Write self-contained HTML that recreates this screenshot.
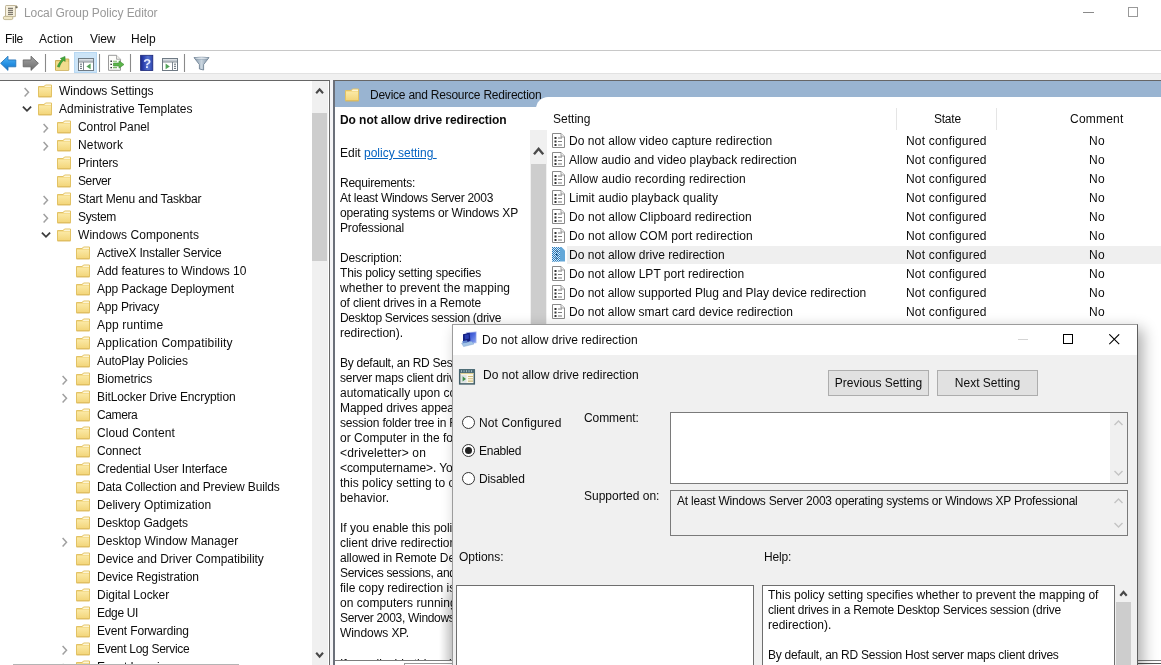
<!DOCTYPE html>
<html><head><meta charset="utf-8"><title>Local Group Policy Editor</title>
<style>
*{box-sizing:border-box}
html,body{margin:0;padding:0}
body{width:1161px;height:665px;overflow:hidden;background:#fff;position:relative;font-family:"Liberation Sans",sans-serif;font-size:12px;color:#0c0c0c;will-change:transform}
.abs,.fold{position:absolute}
.tx{position:absolute;white-space:nowrap;line-height:16px;height:16px;font-size:12px}
.b{font-weight:bold}
#tree{position:absolute;left:0;top:80px;width:330px;height:585px;border-top:1px solid #666;border-right:1px solid #6a6a6a;overflow:hidden}
#desc .tx{left:340px}
.btn{width:101px;height:26px;background:#e1e1e1;border:1px solid #adadad;text-align:center;line-height:24px;font-size:12px}
.rad{width:13px;height:13px;border:1px solid #333;border-radius:50%;background:#fff}
.rad i{position:absolute;left:2px;top:2px;width:7px;height:7px;border-radius:50%;background:#222}
</style></head><body>
<svg class="abs" width="0" height="0" style="left:0;top:0"><defs><linearGradient id="fg" x1="0" y1="0" x2="0" y2="1"><stop offset="0" stop-color="#fbe9a6"/><stop offset="1" stop-color="#f3d67b"/></linearGradient><pattern id="ck" width="2" height="2" patternUnits="userSpaceOnUse"><rect width="2" height="2" fill="#d4e9f7"/><rect width="1" height="1" fill="#2b7bbd"/><rect x="1" y="1" width="1" height="1" fill="#2b7bbd"/></pattern></defs></svg>
<!-- title bar -->
<svg class="abs" style="left:2px;top:4px" width="18" height="18" viewBox="2 4 18 18"><path d="M6.2 5.5 H15.6 C17 5.5 17.8 6.6 17.2 8 H15.4 V16.6 H5.5 V6.4 C5.5 5.8 5.8 5.5 6.2 5.5Z" fill="#f7f1de" stroke="#b9ae8e" stroke-width=".9"/><path d="M15.4 6 C16.6 5.8 17.6 6.6 17.3 7.9 H15.4Z" fill="#6d6a5c"/><path d="M8 8.3H13M8 10.3H13M8 12.3H13M8 14.3H13" stroke="#5f5c52" stroke-width="1"/><rect x="3.3" y="16.3" width="9.6" height="3.3" rx="1.6" fill="#f0e7c6" stroke="#b5a982" stroke-width=".8"/></svg>
<div class="tx" style="left:24px;top:5px;color:#999;letter-spacing:-0.075px">Local Group Policy Editor</div>
<svg class="abs" style="left:1083px;top:6px" width="12" height="12"><path d="M0 6.5H11" stroke="#8a8a8a" stroke-width="1"/></svg>
<svg class="abs" style="left:1128px;top:7px" width="12" height="12"><rect x=".5" y=".5" width="9" height="9" fill="none" stroke="#999"/></svg>
<!-- menu -->
<div class="tx" style="left:5px;top:31px;letter-spacing:-0.358px">File</div>
<div class="tx" style="left:39px;top:31px;letter-spacing:0.109px">Action</div>
<div class="tx" style="left:90px;top:31px;letter-spacing:-0.134px">View</div>
<div class="tx" style="left:131px;top:31px;letter-spacing:0.006px">Help</div>
<div class="abs" style="left:0;top:50px;width:1161px;height:1px;background:#c8c8c8"></div>
<!-- toolbar -->
<div id="toolbar">
<svg class="abs" style="left:0;top:50px" width="215" height="24" viewBox="0 50 215 24">
<defs>
<linearGradient id="gb" x1="0" y1="0" x2="0" y2="1"><stop offset="0" stop-color="#55b4f5"/><stop offset=".55" stop-color="#2590e2"/><stop offset="1" stop-color="#1b73c4"/></linearGradient>
<linearGradient id="gg" x1="0" y1="0" x2="0" y2="1"><stop offset="0" stop-color="#a2a2a2"/><stop offset=".55" stop-color="#858585"/><stop offset="1" stop-color="#6c6c6c"/></linearGradient>
<linearGradient id="gh" x1="0" y1="0" x2="1" y2="0"><stop offset="0" stop-color="#1c2a86"/><stop offset=".22" stop-color="#2a3fae"/><stop offset=".6" stop-color="#5673d0"/><stop offset="1" stop-color="#2c43ad"/></linearGradient>
<linearGradient id="gf" x1="0" y1="0" x2="1" y2="0"><stop offset="0" stop-color="#7f93a6"/><stop offset=".5" stop-color="#c9d5df"/><stop offset="1" stop-color="#7b8fa2"/></linearGradient>
</defs>
<path d="M8 56.2 L.6 63.3 L8 70.4 V66.8 H15.8 V59.9 H8 Z" fill="url(#gb)" stroke="#1f6fb4" stroke-width=".8"/>
<path d="M31 56.2 L38.4 63.3 L31 70.4 V66.8 H23.2 V59.9 H31 Z" fill="url(#gg)" stroke="#5f5f5f" stroke-width=".8"/>
<path d="M45.5 54V72M99.5 54V72M130.5 54V72M184.5 54V72" stroke="#8a8a8a" stroke-width="1.1"/>
<!-- folder up -->
<path d="M55.5 60.5 H61 L62.2 59 H68.8 V70.3 H55.5 Z" fill="#ecd27c" stroke="#c7a84c" stroke-width=".9"/>
<path d="M56 62 H68.3 V70 H56Z" fill="#f1dc8e"/>
<path d="M57.3 66.5 C58.6 63.3 60.3 61.2 62 59.6 L60.3 58.4 L65 56.4 L65.2 61.4 L63.6 60.4 C61.8 62 60.4 64 59.4 67.2 Z" fill="#43a83c" stroke="#2f8229" stroke-width=".5"/>
<!-- highlight -->
<rect x="74.5" y="52.5" width="22" height="20" fill="#cce4f7" stroke="#b7d8f3"/>
<!-- console 1 -->
<rect x="78.5" y="58.5" width="15" height="12" fill="#fff" stroke="#6f7a84"/>
<rect x="79" y="59.4" width="14" height="2.2" fill="#c3cad1"/>
<path d="M78.5 62H93.5M83.5 62V70.5" stroke="#6f7a84" stroke-width=".9"/>
<path d="M80 64.2h2M80 66.3h2M80 68.4h2" stroke="#5e6a75" stroke-width="1"/>
<path d="M90.6 63.5 V69.3 L86.4 66.4Z" fill="#54a35a"/>
<!-- export list -->
<path d="M108.5 55.3 H116.5 L120.5 59.3 V70.3 H108.5 Z" fill="#fdfdfb" stroke="#8f8f8f" stroke-width=".9"/>
<path d="M116.5 55.3 V59.3 H120.5" fill="#ecece8" stroke="#8f8f8f" stroke-width=".7"/>
<path d="M110.4 61.2h1.6M110.4 64.4h1.6M110.4 67.6h1.6" stroke="#3b3b3b" stroke-width="1.4"/>
<path d="M113 61.2h4M113 67.6h4" stroke="#7fb86a" stroke-width="1.1"/>
<path d="M113.5 63 H119 V60.8 L124 64.5 L119 68.2 V66 H113.5Z" fill="#5cb54b" stroke="#3c8c2f" stroke-width=".6"/>
<!-- help -->
<rect x="140.6" y="55.3" width="12.2" height="15.2" fill="url(#gh)" stroke="#1b2778" stroke-width=".8"/>
<text x="147.3" y="68" font-family="Liberation Sans" font-weight="bold" font-size="13" fill="#e6ecff" text-anchor="middle">?</text>
<!-- console 2 -->
<rect x="162.5" y="58.5" width="15" height="12" fill="#fff" stroke="#6f7a84"/>
<rect x="163" y="59.4" width="14" height="2.2" fill="#c3cad1"/>
<path d="M162.5 62H177.5M172.5 62V70.5" stroke="#6f7a84" stroke-width=".9"/>
<path d="M174 64.2h2M174 66.3h2M174 68.4h2" stroke="#5e6a75" stroke-width="1"/>
<path d="M165.6 63.5 V69.3 L169.8 66.4Z" fill="#54a35a"/>
<!-- filter -->
<path d="M194 57.6 H209 L203.6 64.6 V70 L199.4 69 V64.6 Z" fill="url(#gf)" stroke="#66798b" stroke-width=".8"/>
<ellipse cx="201.5" cy="58.2" rx="6.6" ry="1.1" fill="#e4ebf1" stroke="#7b8d9e" stroke-width=".5"/>
</svg>
</div>
<div class="abs" style="left:0;top:73px;width:1161px;height:7px;background:#f0f0f0;border-top:1px solid #e2e2e2"></div>
<!-- tree -->
<div id="tree"></div>
<svg class="abs" style="left:22px;top:85px" width="10" height="12" viewBox="0 0 10 12"><path d="M2.6 3 L6.5 7.2 L2.6 11.4" fill="none" stroke="#a0a0a0" stroke-width="1.5"/></svg>
<svg class="fold" style="left:37px;top:84px" width="16" height="14" viewBox="0 0 16 14"><path d="M1.5 2.5 L7 2.5 L8.5 1 L14.5 1 L14.5 12.7 L1.5 12.7 Z" fill="#f1d37a" stroke="#e2c264" stroke-width="1"/><path d="M8.8 1.6 L14 1.6 L14 3 L7.6 3 Z" fill="#fdf5d6"/><path d="M2 3.6 H14 V12.2 H2 Z" fill="url(#fg)"/><path d="M1.5 12.9 H14.5" stroke="#d9b552" stroke-width=".8"/></svg>
<div class="tx" style="left:59px;top:83px;letter-spacing:-0.056px">Windows Settings</div>
<svg class="abs" style="left:21px;top:104px" width="12" height="10" viewBox="0 0 12 10"><path d="M1.9 2.6 L6 6.8 L10.1 2.6" fill="none" stroke="#3c3c3c" stroke-width="1.8"/></svg>
<svg class="fold" style="left:37px;top:102px" width="16" height="14" viewBox="0 0 16 14"><path d="M1.5 2.5 L7 2.5 L8.5 1 L14.5 1 L14.5 12.7 L1.5 12.7 Z" fill="#f1d37a" stroke="#e2c264" stroke-width="1"/><path d="M8.8 1.6 L14 1.6 L14 3 L7.6 3 Z" fill="#fdf5d6"/><path d="M2 3.6 H14 V12.2 H2 Z" fill="url(#fg)"/><path d="M1.5 12.9 H14.5" stroke="#d9b552" stroke-width=".8"/></svg>
<div class="tx" style="left:59px;top:101px;letter-spacing:0.017px">Administrative Templates</div>
<svg class="abs" style="left:41px;top:121px" width="10" height="12" viewBox="0 0 10 12"><path d="M2.6 3 L6.5 7.2 L2.6 11.4" fill="none" stroke="#a0a0a0" stroke-width="1.5"/></svg>
<svg class="fold" style="left:56px;top:120px" width="16" height="14" viewBox="0 0 16 14"><path d="M1.5 2.5 L7 2.5 L8.5 1 L14.5 1 L14.5 12.7 L1.5 12.7 Z" fill="#f1d37a" stroke="#e2c264" stroke-width="1"/><path d="M8.8 1.6 L14 1.6 L14 3 L7.6 3 Z" fill="#fdf5d6"/><path d="M2 3.6 H14 V12.2 H2 Z" fill="url(#fg)"/><path d="M1.5 12.9 H14.5" stroke="#d9b552" stroke-width=".8"/></svg>
<div class="tx" style="left:78px;top:119px;letter-spacing:-0.102px">Control Panel</div>
<svg class="abs" style="left:41px;top:139px" width="10" height="12" viewBox="0 0 10 12"><path d="M2.6 3 L6.5 7.2 L2.6 11.4" fill="none" stroke="#a0a0a0" stroke-width="1.5"/></svg>
<svg class="fold" style="left:56px;top:138px" width="16" height="14" viewBox="0 0 16 14"><path d="M1.5 2.5 L7 2.5 L8.5 1 L14.5 1 L14.5 12.7 L1.5 12.7 Z" fill="#f1d37a" stroke="#e2c264" stroke-width="1"/><path d="M8.8 1.6 L14 1.6 L14 3 L7.6 3 Z" fill="#fdf5d6"/><path d="M2 3.6 H14 V12.2 H2 Z" fill="url(#fg)"/><path d="M1.5 12.9 H14.5" stroke="#d9b552" stroke-width=".8"/></svg>
<div class="tx" style="left:78px;top:137px;letter-spacing:0.151px">Network</div>

<svg class="fold" style="left:56px;top:156px" width="16" height="14" viewBox="0 0 16 14"><path d="M1.5 2.5 L7 2.5 L8.5 1 L14.5 1 L14.5 12.7 L1.5 12.7 Z" fill="#f1d37a" stroke="#e2c264" stroke-width="1"/><path d="M8.8 1.6 L14 1.6 L14 3 L7.6 3 Z" fill="#fdf5d6"/><path d="M2 3.6 H14 V12.2 H2 Z" fill="url(#fg)"/><path d="M1.5 12.9 H14.5" stroke="#d9b552" stroke-width=".8"/></svg>
<div class="tx" style="left:78px;top:155px;letter-spacing:-0.155px">Printers</div>

<svg class="fold" style="left:56px;top:174px" width="16" height="14" viewBox="0 0 16 14"><path d="M1.5 2.5 L7 2.5 L8.5 1 L14.5 1 L14.5 12.7 L1.5 12.7 Z" fill="#f1d37a" stroke="#e2c264" stroke-width="1"/><path d="M8.8 1.6 L14 1.6 L14 3 L7.6 3 Z" fill="#fdf5d6"/><path d="M2 3.6 H14 V12.2 H2 Z" fill="url(#fg)"/><path d="M1.5 12.9 H14.5" stroke="#d9b552" stroke-width=".8"/></svg>
<div class="tx" style="left:78px;top:173px;letter-spacing:-0.4px">Server</div>
<svg class="abs" style="left:41px;top:193px" width="10" height="12" viewBox="0 0 10 12"><path d="M2.6 3 L6.5 7.2 L2.6 11.4" fill="none" stroke="#a0a0a0" stroke-width="1.5"/></svg>
<svg class="fold" style="left:56px;top:192px" width="16" height="14" viewBox="0 0 16 14"><path d="M1.5 2.5 L7 2.5 L8.5 1 L14.5 1 L14.5 12.7 L1.5 12.7 Z" fill="#f1d37a" stroke="#e2c264" stroke-width="1"/><path d="M8.8 1.6 L14 1.6 L14 3 L7.6 3 Z" fill="#fdf5d6"/><path d="M2 3.6 H14 V12.2 H2 Z" fill="url(#fg)"/><path d="M1.5 12.9 H14.5" stroke="#d9b552" stroke-width=".8"/></svg>
<div class="tx" style="left:78px;top:191px;letter-spacing:-0.17px">Start Menu and Taskbar</div>
<svg class="abs" style="left:41px;top:211px" width="10" height="12" viewBox="0 0 10 12"><path d="M2.6 3 L6.5 7.2 L2.6 11.4" fill="none" stroke="#a0a0a0" stroke-width="1.5"/></svg>
<svg class="fold" style="left:56px;top:210px" width="16" height="14" viewBox="0 0 16 14"><path d="M1.5 2.5 L7 2.5 L8.5 1 L14.5 1 L14.5 12.7 L1.5 12.7 Z" fill="#f1d37a" stroke="#e2c264" stroke-width="1"/><path d="M8.8 1.6 L14 1.6 L14 3 L7.6 3 Z" fill="#fdf5d6"/><path d="M2 3.6 H14 V12.2 H2 Z" fill="url(#fg)"/><path d="M1.5 12.9 H14.5" stroke="#d9b552" stroke-width=".8"/></svg>
<div class="tx" style="left:78px;top:209px;letter-spacing:-0.362px">System</div>
<svg class="abs" style="left:40px;top:230px" width="12" height="10" viewBox="0 0 12 10"><path d="M1.9 2.6 L6 6.8 L10.1 2.6" fill="none" stroke="#3c3c3c" stroke-width="1.8"/></svg>
<svg class="fold" style="left:56px;top:228px" width="16" height="14" viewBox="0 0 16 14"><path d="M1.5 2.5 L7 2.5 L8.5 1 L14.5 1 L14.5 12.7 L1.5 12.7 Z" fill="#f1d37a" stroke="#e2c264" stroke-width="1"/><path d="M8.8 1.6 L14 1.6 L14 3 L7.6 3 Z" fill="#fdf5d6"/><path d="M2 3.6 H14 V12.2 H2 Z" fill="url(#fg)"/><path d="M1.5 12.9 H14.5" stroke="#d9b552" stroke-width=".8"/></svg>
<div class="tx" style="left:78px;top:227px;letter-spacing:0.053px">Windows Components</div>

<svg class="fold" style="left:75px;top:246px" width="16" height="14" viewBox="0 0 16 14"><path d="M1.5 2.5 L7 2.5 L8.5 1 L14.5 1 L14.5 12.7 L1.5 12.7 Z" fill="#f1d37a" stroke="#e2c264" stroke-width="1"/><path d="M8.8 1.6 L14 1.6 L14 3 L7.6 3 Z" fill="#fdf5d6"/><path d="M2 3.6 H14 V12.2 H2 Z" fill="url(#fg)"/><path d="M1.5 12.9 H14.5" stroke="#d9b552" stroke-width=".8"/></svg>
<div class="tx" style="left:97px;top:245px;letter-spacing:-0.195px">ActiveX Installer Service</div>

<svg class="fold" style="left:75px;top:264px" width="16" height="14" viewBox="0 0 16 14"><path d="M1.5 2.5 L7 2.5 L8.5 1 L14.5 1 L14.5 12.7 L1.5 12.7 Z" fill="#f1d37a" stroke="#e2c264" stroke-width="1"/><path d="M8.8 1.6 L14 1.6 L14 3 L7.6 3 Z" fill="#fdf5d6"/><path d="M2 3.6 H14 V12.2 H2 Z" fill="url(#fg)"/><path d="M1.5 12.9 H14.5" stroke="#d9b552" stroke-width=".8"/></svg>
<div class="tx" style="left:97px;top:263px;letter-spacing:-0.029px">Add features to Windows 10</div>

<svg class="fold" style="left:75px;top:282px" width="16" height="14" viewBox="0 0 16 14"><path d="M1.5 2.5 L7 2.5 L8.5 1 L14.5 1 L14.5 12.7 L1.5 12.7 Z" fill="#f1d37a" stroke="#e2c264" stroke-width="1"/><path d="M8.8 1.6 L14 1.6 L14 3 L7.6 3 Z" fill="#fdf5d6"/><path d="M2 3.6 H14 V12.2 H2 Z" fill="url(#fg)"/><path d="M1.5 12.9 H14.5" stroke="#d9b552" stroke-width=".8"/></svg>
<div class="tx" style="left:97px;top:281px;letter-spacing:-0.085px">App Package Deployment</div>

<svg class="fold" style="left:75px;top:300px" width="16" height="14" viewBox="0 0 16 14"><path d="M1.5 2.5 L7 2.5 L8.5 1 L14.5 1 L14.5 12.7 L1.5 12.7 Z" fill="#f1d37a" stroke="#e2c264" stroke-width="1"/><path d="M8.8 1.6 L14 1.6 L14 3 L7.6 3 Z" fill="#fdf5d6"/><path d="M2 3.6 H14 V12.2 H2 Z" fill="url(#fg)"/><path d="M1.5 12.9 H14.5" stroke="#d9b552" stroke-width=".8"/></svg>
<div class="tx" style="left:97px;top:299px;letter-spacing:-0.186px">App Privacy</div>

<svg class="fold" style="left:75px;top:318px" width="16" height="14" viewBox="0 0 16 14"><path d="M1.5 2.5 L7 2.5 L8.5 1 L14.5 1 L14.5 12.7 L1.5 12.7 Z" fill="#f1d37a" stroke="#e2c264" stroke-width="1"/><path d="M8.8 1.6 L14 1.6 L14 3 L7.6 3 Z" fill="#fdf5d6"/><path d="M2 3.6 H14 V12.2 H2 Z" fill="url(#fg)"/><path d="M1.5 12.9 H14.5" stroke="#d9b552" stroke-width=".8"/></svg>
<div class="tx" style="left:97px;top:317px;letter-spacing:0.148px">App runtime</div>

<svg class="fold" style="left:75px;top:336px" width="16" height="14" viewBox="0 0 16 14"><path d="M1.5 2.5 L7 2.5 L8.5 1 L14.5 1 L14.5 12.7 L1.5 12.7 Z" fill="#f1d37a" stroke="#e2c264" stroke-width="1"/><path d="M8.8 1.6 L14 1.6 L14 3 L7.6 3 Z" fill="#fdf5d6"/><path d="M2 3.6 H14 V12.2 H2 Z" fill="url(#fg)"/><path d="M1.5 12.9 H14.5" stroke="#d9b552" stroke-width=".8"/></svg>
<div class="tx" style="left:97px;top:335px;letter-spacing:0.203px">Application Compatibility</div>

<svg class="fold" style="left:75px;top:354px" width="16" height="14" viewBox="0 0 16 14"><path d="M1.5 2.5 L7 2.5 L8.5 1 L14.5 1 L14.5 12.7 L1.5 12.7 Z" fill="#f1d37a" stroke="#e2c264" stroke-width="1"/><path d="M8.8 1.6 L14 1.6 L14 3 L7.6 3 Z" fill="#fdf5d6"/><path d="M2 3.6 H14 V12.2 H2 Z" fill="url(#fg)"/><path d="M1.5 12.9 H14.5" stroke="#d9b552" stroke-width=".8"/></svg>
<div class="tx" style="left:97px;top:353px;letter-spacing:-0.112px">AutoPlay Policies</div>
<svg class="abs" style="left:60px;top:373px" width="10" height="12" viewBox="0 0 10 12"><path d="M2.6 3 L6.5 7.2 L2.6 11.4" fill="none" stroke="#a0a0a0" stroke-width="1.5"/></svg>
<svg class="fold" style="left:75px;top:372px" width="16" height="14" viewBox="0 0 16 14"><path d="M1.5 2.5 L7 2.5 L8.5 1 L14.5 1 L14.5 12.7 L1.5 12.7 Z" fill="#f1d37a" stroke="#e2c264" stroke-width="1"/><path d="M8.8 1.6 L14 1.6 L14 3 L7.6 3 Z" fill="#fdf5d6"/><path d="M2 3.6 H14 V12.2 H2 Z" fill="url(#fg)"/><path d="M1.5 12.9 H14.5" stroke="#d9b552" stroke-width=".8"/></svg>
<div class="tx" style="left:97px;top:371px;letter-spacing:-0.092px">Biometrics</div>
<svg class="abs" style="left:60px;top:391px" width="10" height="12" viewBox="0 0 10 12"><path d="M2.6 3 L6.5 7.2 L2.6 11.4" fill="none" stroke="#a0a0a0" stroke-width="1.5"/></svg>
<svg class="fold" style="left:75px;top:390px" width="16" height="14" viewBox="0 0 16 14"><path d="M1.5 2.5 L7 2.5 L8.5 1 L14.5 1 L14.5 12.7 L1.5 12.7 Z" fill="#f1d37a" stroke="#e2c264" stroke-width="1"/><path d="M8.8 1.6 L14 1.6 L14 3 L7.6 3 Z" fill="#fdf5d6"/><path d="M2 3.6 H14 V12.2 H2 Z" fill="url(#fg)"/><path d="M1.5 12.9 H14.5" stroke="#d9b552" stroke-width=".8"/></svg>
<div class="tx" style="left:97px;top:389px;letter-spacing:-0.111px">BitLocker Drive Encryption</div>

<svg class="fold" style="left:75px;top:408px" width="16" height="14" viewBox="0 0 16 14"><path d="M1.5 2.5 L7 2.5 L8.5 1 L14.5 1 L14.5 12.7 L1.5 12.7 Z" fill="#f1d37a" stroke="#e2c264" stroke-width="1"/><path d="M8.8 1.6 L14 1.6 L14 3 L7.6 3 Z" fill="#fdf5d6"/><path d="M2 3.6 H14 V12.2 H2 Z" fill="url(#fg)"/><path d="M1.5 12.9 H14.5" stroke="#d9b552" stroke-width=".8"/></svg>
<div class="tx" style="left:97px;top:407px;letter-spacing:-0.393px">Camera</div>

<svg class="fold" style="left:75px;top:426px" width="16" height="14" viewBox="0 0 16 14"><path d="M1.5 2.5 L7 2.5 L8.5 1 L14.5 1 L14.5 12.7 L1.5 12.7 Z" fill="#f1d37a" stroke="#e2c264" stroke-width="1"/><path d="M8.8 1.6 L14 1.6 L14 3 L7.6 3 Z" fill="#fdf5d6"/><path d="M2 3.6 H14 V12.2 H2 Z" fill="url(#fg)"/><path d="M1.5 12.9 H14.5" stroke="#d9b552" stroke-width=".8"/></svg>
<div class="tx" style="left:97px;top:425px;letter-spacing:0.1px">Cloud Content</div>

<svg class="fold" style="left:75px;top:444px" width="16" height="14" viewBox="0 0 16 14"><path d="M1.5 2.5 L7 2.5 L8.5 1 L14.5 1 L14.5 12.7 L1.5 12.7 Z" fill="#f1d37a" stroke="#e2c264" stroke-width="1"/><path d="M8.8 1.6 L14 1.6 L14 3 L7.6 3 Z" fill="#fdf5d6"/><path d="M2 3.6 H14 V12.2 H2 Z" fill="url(#fg)"/><path d="M1.5 12.9 H14.5" stroke="#d9b552" stroke-width=".8"/></svg>
<div class="tx" style="left:97px;top:443px;letter-spacing:-0.121px">Connect</div>

<svg class="fold" style="left:75px;top:462px" width="16" height="14" viewBox="0 0 16 14"><path d="M1.5 2.5 L7 2.5 L8.5 1 L14.5 1 L14.5 12.7 L1.5 12.7 Z" fill="#f1d37a" stroke="#e2c264" stroke-width="1"/><path d="M8.8 1.6 L14 1.6 L14 3 L7.6 3 Z" fill="#fdf5d6"/><path d="M2 3.6 H14 V12.2 H2 Z" fill="url(#fg)"/><path d="M1.5 12.9 H14.5" stroke="#d9b552" stroke-width=".8"/></svg>
<div class="tx" style="left:97px;top:461px;letter-spacing:-0.125px">Credential User Interface</div>

<svg class="fold" style="left:75px;top:480px" width="16" height="14" viewBox="0 0 16 14"><path d="M1.5 2.5 L7 2.5 L8.5 1 L14.5 1 L14.5 12.7 L1.5 12.7 Z" fill="#f1d37a" stroke="#e2c264" stroke-width="1"/><path d="M8.8 1.6 L14 1.6 L14 3 L7.6 3 Z" fill="#fdf5d6"/><path d="M2 3.6 H14 V12.2 H2 Z" fill="url(#fg)"/><path d="M1.5 12.9 H14.5" stroke="#d9b552" stroke-width=".8"/></svg>
<div class="tx" style="left:97px;top:479px;letter-spacing:-0.119px">Data Collection and Preview Builds</div>

<svg class="fold" style="left:75px;top:498px" width="16" height="14" viewBox="0 0 16 14"><path d="M1.5 2.5 L7 2.5 L8.5 1 L14.5 1 L14.5 12.7 L1.5 12.7 Z" fill="#f1d37a" stroke="#e2c264" stroke-width="1"/><path d="M8.8 1.6 L14 1.6 L14 3 L7.6 3 Z" fill="#fdf5d6"/><path d="M2 3.6 H14 V12.2 H2 Z" fill="url(#fg)"/><path d="M1.5 12.9 H14.5" stroke="#d9b552" stroke-width=".8"/></svg>
<div class="tx" style="left:97px;top:497px;letter-spacing:0.038px">Delivery Optimization</div>

<svg class="fold" style="left:75px;top:516px" width="16" height="14" viewBox="0 0 16 14"><path d="M1.5 2.5 L7 2.5 L8.5 1 L14.5 1 L14.5 12.7 L1.5 12.7 Z" fill="#f1d37a" stroke="#e2c264" stroke-width="1"/><path d="M8.8 1.6 L14 1.6 L14 3 L7.6 3 Z" fill="#fdf5d6"/><path d="M2 3.6 H14 V12.2 H2 Z" fill="url(#fg)"/><path d="M1.5 12.9 H14.5" stroke="#d9b552" stroke-width=".8"/></svg>
<div class="tx" style="left:97px;top:515px;letter-spacing:-0.119px">Desktop Gadgets</div>
<svg class="abs" style="left:60px;top:535px" width="10" height="12" viewBox="0 0 10 12"><path d="M2.6 3 L6.5 7.2 L2.6 11.4" fill="none" stroke="#a0a0a0" stroke-width="1.5"/></svg>
<svg class="fold" style="left:75px;top:534px" width="16" height="14" viewBox="0 0 16 14"><path d="M1.5 2.5 L7 2.5 L8.5 1 L14.5 1 L14.5 12.7 L1.5 12.7 Z" fill="#f1d37a" stroke="#e2c264" stroke-width="1"/><path d="M8.8 1.6 L14 1.6 L14 3 L7.6 3 Z" fill="#fdf5d6"/><path d="M2 3.6 H14 V12.2 H2 Z" fill="url(#fg)"/><path d="M1.5 12.9 H14.5" stroke="#d9b552" stroke-width=".8"/></svg>
<div class="tx" style="left:97px;top:533px;letter-spacing:0.019px">Desktop Window Manager</div>

<svg class="fold" style="left:75px;top:552px" width="16" height="14" viewBox="0 0 16 14"><path d="M1.5 2.5 L7 2.5 L8.5 1 L14.5 1 L14.5 12.7 L1.5 12.7 Z" fill="#f1d37a" stroke="#e2c264" stroke-width="1"/><path d="M8.8 1.6 L14 1.6 L14 3 L7.6 3 Z" fill="#fdf5d6"/><path d="M2 3.6 H14 V12.2 H2 Z" fill="url(#fg)"/><path d="M1.5 12.9 H14.5" stroke="#d9b552" stroke-width=".8"/></svg>
<div class="tx" style="left:97px;top:551px;letter-spacing:-0.018px">Device and Driver Compatibility</div>

<svg class="fold" style="left:75px;top:570px" width="16" height="14" viewBox="0 0 16 14"><path d="M1.5 2.5 L7 2.5 L8.5 1 L14.5 1 L14.5 12.7 L1.5 12.7 Z" fill="#f1d37a" stroke="#e2c264" stroke-width="1"/><path d="M8.8 1.6 L14 1.6 L14 3 L7.6 3 Z" fill="#fdf5d6"/><path d="M2 3.6 H14 V12.2 H2 Z" fill="url(#fg)"/><path d="M1.5 12.9 H14.5" stroke="#d9b552" stroke-width=".8"/></svg>
<div class="tx" style="left:97px;top:569px;letter-spacing:-0.113px">Device Registration</div>

<svg class="fold" style="left:75px;top:588px" width="16" height="14" viewBox="0 0 16 14"><path d="M1.5 2.5 L7 2.5 L8.5 1 L14.5 1 L14.5 12.7 L1.5 12.7 Z" fill="#f1d37a" stroke="#e2c264" stroke-width="1"/><path d="M8.8 1.6 L14 1.6 L14 3 L7.6 3 Z" fill="#fdf5d6"/><path d="M2 3.6 H14 V12.2 H2 Z" fill="url(#fg)"/><path d="M1.5 12.9 H14.5" stroke="#d9b552" stroke-width=".8"/></svg>
<div class="tx" style="left:97px;top:587px;letter-spacing:-0.04px">Digital Locker</div>

<svg class="fold" style="left:75px;top:606px" width="16" height="14" viewBox="0 0 16 14"><path d="M1.5 2.5 L7 2.5 L8.5 1 L14.5 1 L14.5 12.7 L1.5 12.7 Z" fill="#f1d37a" stroke="#e2c264" stroke-width="1"/><path d="M8.8 1.6 L14 1.6 L14 3 L7.6 3 Z" fill="#fdf5d6"/><path d="M2 3.6 H14 V12.2 H2 Z" fill="url(#fg)"/><path d="M1.5 12.9 H14.5" stroke="#d9b552" stroke-width=".8"/></svg>
<div class="tx" style="left:97px;top:605px;letter-spacing:-0.32px">Edge UI</div>

<svg class="fold" style="left:75px;top:624px" width="16" height="14" viewBox="0 0 16 14"><path d="M1.5 2.5 L7 2.5 L8.5 1 L14.5 1 L14.5 12.7 L1.5 12.7 Z" fill="#f1d37a" stroke="#e2c264" stroke-width="1"/><path d="M8.8 1.6 L14 1.6 L14 3 L7.6 3 Z" fill="#fdf5d6"/><path d="M2 3.6 H14 V12.2 H2 Z" fill="url(#fg)"/><path d="M1.5 12.9 H14.5" stroke="#d9b552" stroke-width=".8"/></svg>
<div class="tx" style="left:97px;top:623px;letter-spacing:-0.136px">Event Forwarding</div>
<svg class="abs" style="left:60px;top:643px" width="10" height="12" viewBox="0 0 10 12"><path d="M2.6 3 L6.5 7.2 L2.6 11.4" fill="none" stroke="#a0a0a0" stroke-width="1.5"/></svg>
<svg class="fold" style="left:75px;top:642px" width="16" height="14" viewBox="0 0 16 14"><path d="M1.5 2.5 L7 2.5 L8.5 1 L14.5 1 L14.5 12.7 L1.5 12.7 Z" fill="#f1d37a" stroke="#e2c264" stroke-width="1"/><path d="M8.8 1.6 L14 1.6 L14 3 L7.6 3 Z" fill="#fdf5d6"/><path d="M2 3.6 H14 V12.2 H2 Z" fill="url(#fg)"/><path d="M1.5 12.9 H14.5" stroke="#d9b552" stroke-width=".8"/></svg>
<div class="tx" style="left:97px;top:641px;letter-spacing:-0.293px">Event Log Service</div>
<svg class="abs" style="left:60px;top:661px" width="10" height="12" viewBox="0 0 10 12"><path d="M2.6 3 L6.5 7.2 L2.6 11.4" fill="none" stroke="#a0a0a0" stroke-width="1.5"/></svg>
<svg class="fold" style="left:75px;top:660px" width="16" height="14" viewBox="0 0 16 14"><path d="M1.5 2.5 L7 2.5 L8.5 1 L14.5 1 L14.5 12.7 L1.5 12.7 Z" fill="#f1d37a" stroke="#e2c264" stroke-width="1"/><path d="M8.8 1.6 L14 1.6 L14 3 L7.6 3 Z" fill="#fdf5d6"/><path d="M2 3.6 H14 V12.2 H2 Z" fill="url(#fg)"/><path d="M1.5 12.9 H14.5" stroke="#d9b552" stroke-width=".8"/></svg>
<div class="tx" style="left:97px;top:659px;letter-spacing:-0.083px">Event Logging</div>
<div class="abs" style="left:312px;top:81px;width:16px;height:584px;background:#f0f0f0"></div>
<div class="abs" style="left:312px;top:113px;width:15px;height:148px;background:#cdcdcd"></div>
<svg class="abs" style="left:314px;top:86px" width="12" height="10"><path d="M2.2 7.3 L5.6 3.4 L9 7.3" fill="none" stroke="#484848" stroke-width="2.1"/></svg>
<svg class="abs" style="left:314px;top:650px" width="12" height="10"><path d="M2.2 2.8 L5.6 6.7 L9 2.8" fill="none" stroke="#484848" stroke-width="2.1"/></svg>
<div class="abs" style="left:330px;top:80px;width:4px;height:585px;background:#f5f5f7"></div>
<!-- right pane -->
<div class="abs" style="left:333px;top:80px;width:828px;height:585px;border-left:2px solid #6b707a;border-top:1px solid #666;background:#fff"></div>
<div class="abs" style="left:335px;top:81px;width:826px;height:26px;background:#99b4d1"></div>
<div class="abs" style="left:536px;top:97px;width:625px;height:30px;background:#fff;border-top-left-radius:12px"></div>
<svg class="fold" style="left:344px;top:88px" width="16" height="14" viewBox="0 0 16 14"><path d="M1.5 2.5 L7 2.5 L8.5 1 L14.5 1 L14.5 12.7 L1.5 12.7 Z" fill="#f1d37a" stroke="#e2c264" stroke-width="1"/><path d="M8.8 1.6 L14 1.6 L14 3 L7.6 3 Z" fill="#fdf5d6"/><path d="M2 3.6 H14 V12.2 H2 Z" fill="url(#fg)"/><path d="M1.5 12.9 H14.5" stroke="#d9b552" stroke-width=".8"/></svg>
<div class="tx" style="left:370px;top:87px;letter-spacing:-0.234px">Device and Resource Redirection</div>
<!-- description -->
<div id="desc">
<div class="tx b" style="top:112px;letter-spacing:-0.071px">Do not allow drive redirection</div>
<div class="tx" style="top:145px">Edit <span style="color:#0563c1;text-decoration:underline">policy setting&nbsp;</span></div>
<div class="tx" style="top:175px;letter-spacing:-0.233px">Requirements:</div>
<div class="tx" style="top:190px;letter-spacing:-0.275px">At least Windows Server 2003</div>
<div class="tx" style="top:205px;letter-spacing:-0.152px">operating systems or Windows XP</div>
<div class="tx" style="top:220px;letter-spacing:-0.169px">Professional</div>
<div class="tx" style="top:250px;letter-spacing:-0.113px">Description:</div>
<div class="tx" style="top:265px;letter-spacing:-0.151px">This policy setting specifies</div>
<div class="tx" style="top:280px;letter-spacing:0.043px">whether to prevent the mapping</div>
<div class="tx" style="top:295px;letter-spacing:-0.132px">of client drives in a Remote</div>
<div class="tx" style="top:310px;letter-spacing:-0.314px">Desktop Services session (drive</div>
<div class="tx" style="top:325px;letter-spacing:-0.028px">redirection).</div>
<div class="tx" style="top:355px;letter-spacing:-0.268px">By default, an RD Session Host</div>
<div class="tx" style="top:370px;letter-spacing:-0.228px">server maps client drives</div>
<div class="tx" style="top:385px;letter-spacing:0.009px">automatically upon connection.</div>
<div class="tx" style="top:400px;letter-spacing:-0.076px">Mapped drives appear in the</div>
<div class="tx" style="top:415px;letter-spacing:-0.205px">session folder tree in File Explorer</div>
<div class="tx" style="top:430px;letter-spacing:0.013px">or Computer in the format</div>
<div class="tx" style="top:445px;letter-spacing:0.163px">&lt;driveletter&gt; on</div>
<div class="tx" style="top:460px;letter-spacing:-0.078px">&lt;computername&gt;. You can use</div>
<div class="tx" style="top:475px;letter-spacing:0.017px">this policy setting to override this</div>
<div class="tx" style="top:490px;letter-spacing:0.033px">behavior.</div>
<div class="tx" style="top:520px;letter-spacing:-0.021px">If you enable this policy setting,</div>
<div class="tx" style="top:535px;letter-spacing:-0.023px">client drive redirection is not</div>
<div class="tx" style="top:550px;letter-spacing:-0.122px">allowed in Remote Desktop</div>
<div class="tx" style="top:565px;letter-spacing:-0.325px">Services sessions, and Clipboard</div>
<div class="tx" style="top:580px;letter-spacing:-0.011px">file copy redirection is not allowed</div>
<div class="tx" style="top:595px;letter-spacing:0.033px">on computers running Windows</div>
<div class="tx" style="top:610px;letter-spacing:-0.31px">Server 2003, Windows 8, and</div>
<div class="tx" style="top:625px;letter-spacing:-0.072px">Windows XP.</div>
<div class="tx" style="top:656px;letter-spacing:-0.02px">If you disable this policy setting,</div>
</div>
<div class="abs" style="left:530px;top:130px;width:17px;height:534px;background:#f0f0f0"></div>
<div class="abs" style="left:531px;top:164px;width:15px;height:501px;background:#cdcdcd"></div>
<svg class="abs" style="left:531px;top:145px" width="16" height="12"><path d="M3 9.2 L7.6 3.8 L12.2 9.2" fill="none" stroke="#4a4a4a" stroke-width="2.4"/></svg>
<!-- list -->
<div class="tx" style="left:553px;top:111px;letter-spacing:0.016px">Setting</div>
<div class="tx" style="left:934px;top:111px;letter-spacing:-0.233px">State</div>
<div class="tx" style="left:1070px;top:111px;letter-spacing:0.212px">Comment</div>
<div class="abs" style="left:896px;top:108px;width:1px;height:22px;background:#e5e5e5"></div>
<div class="abs" style="left:996px;top:108px;width:1px;height:22px;background:#e5e5e5"></div>
<svg class="abs" style="left:552px;top:133px" width="13" height="15" viewBox="0 0 13 15"><path d="M.5 .5 H9 L12.5 4 V14.5 H.5 Z" fill="#fff" stroke="#8a8a8a"/><path d="M9 .5 V4 H12.5" fill="#eee" stroke="#8a8a8a" stroke-width=".8"/><rect x="2.5" y="4" width="2" height="2" fill="#333"/><rect x="2.5" y="7.5" width="2" height="2" fill="#333"/><rect x="2.5" y="11" width="2" height="2" fill="#333"/><path d="M6 5 H10 M6 8.5 H10 M6 12 H10" stroke="#777" stroke-width="1"/></svg>
<div class="tx" style="left:569px;top:133px;letter-spacing:0.065px">Do not allow video capture redirection</div>
<div class="tx" style="left:906px;top:133px;letter-spacing:0.182px">Not configured</div>
<div class="tx" style="left:1089px;top:133px;letter-spacing:0.319px">No</div>
<svg class="abs" style="left:552px;top:152px" width="13" height="15" viewBox="0 0 13 15"><path d="M.5 .5 H9 L12.5 4 V14.5 H.5 Z" fill="#fff" stroke="#8a8a8a"/><path d="M9 .5 V4 H12.5" fill="#eee" stroke="#8a8a8a" stroke-width=".8"/><rect x="2.5" y="4" width="2" height="2" fill="#333"/><rect x="2.5" y="7.5" width="2" height="2" fill="#333"/><rect x="2.5" y="11" width="2" height="2" fill="#333"/><path d="M6 5 H10 M6 8.5 H10 M6 12 H10" stroke="#777" stroke-width="1"/></svg>
<div class="tx" style="left:569px;top:152px;letter-spacing:0.024px">Allow audio and video playback redirection</div>
<div class="tx" style="left:906px;top:152px;letter-spacing:0.182px">Not configured</div>
<div class="tx" style="left:1089px;top:152px;letter-spacing:0.319px">No</div>
<svg class="abs" style="left:552px;top:171px" width="13" height="15" viewBox="0 0 13 15"><path d="M.5 .5 H9 L12.5 4 V14.5 H.5 Z" fill="#fff" stroke="#8a8a8a"/><path d="M9 .5 V4 H12.5" fill="#eee" stroke="#8a8a8a" stroke-width=".8"/><rect x="2.5" y="4" width="2" height="2" fill="#333"/><rect x="2.5" y="7.5" width="2" height="2" fill="#333"/><rect x="2.5" y="11" width="2" height="2" fill="#333"/><path d="M6 5 H10 M6 8.5 H10 M6 12 H10" stroke="#777" stroke-width="1"/></svg>
<div class="tx" style="left:569px;top:171px;letter-spacing:0.083px">Allow audio recording redirection</div>
<div class="tx" style="left:906px;top:171px;letter-spacing:0.182px">Not configured</div>
<div class="tx" style="left:1089px;top:171px;letter-spacing:0.319px">No</div>
<svg class="abs" style="left:552px;top:190px" width="13" height="15" viewBox="0 0 13 15"><path d="M.5 .5 H9 L12.5 4 V14.5 H.5 Z" fill="#fff" stroke="#8a8a8a"/><path d="M9 .5 V4 H12.5" fill="#eee" stroke="#8a8a8a" stroke-width=".8"/><rect x="2.5" y="4" width="2" height="2" fill="#333"/><rect x="2.5" y="7.5" width="2" height="2" fill="#333"/><rect x="2.5" y="11" width="2" height="2" fill="#333"/><path d="M6 5 H10 M6 8.5 H10 M6 12 H10" stroke="#777" stroke-width="1"/></svg>
<div class="tx" style="left:569px;top:190px;letter-spacing:0.081px">Limit audio playback quality</div>
<div class="tx" style="left:906px;top:190px;letter-spacing:0.182px">Not configured</div>
<div class="tx" style="left:1089px;top:190px;letter-spacing:0.319px">No</div>
<svg class="abs" style="left:552px;top:209px" width="13" height="15" viewBox="0 0 13 15"><path d="M.5 .5 H9 L12.5 4 V14.5 H.5 Z" fill="#fff" stroke="#8a8a8a"/><path d="M9 .5 V4 H12.5" fill="#eee" stroke="#8a8a8a" stroke-width=".8"/><rect x="2.5" y="4" width="2" height="2" fill="#333"/><rect x="2.5" y="7.5" width="2" height="2" fill="#333"/><rect x="2.5" y="11" width="2" height="2" fill="#333"/><path d="M6 5 H10 M6 8.5 H10 M6 12 H10" stroke="#777" stroke-width="1"/></svg>
<div class="tx" style="left:569px;top:209px;letter-spacing:0.075px">Do not allow Clipboard redirection</div>
<div class="tx" style="left:906px;top:209px;letter-spacing:0.182px">Not configured</div>
<div class="tx" style="left:1089px;top:209px;letter-spacing:0.319px">No</div>
<svg class="abs" style="left:552px;top:228px" width="13" height="15" viewBox="0 0 13 15"><path d="M.5 .5 H9 L12.5 4 V14.5 H.5 Z" fill="#fff" stroke="#8a8a8a"/><path d="M9 .5 V4 H12.5" fill="#eee" stroke="#8a8a8a" stroke-width=".8"/><rect x="2.5" y="4" width="2" height="2" fill="#333"/><rect x="2.5" y="7.5" width="2" height="2" fill="#333"/><rect x="2.5" y="11" width="2" height="2" fill="#333"/><path d="M6 5 H10 M6 8.5 H10 M6 12 H10" stroke="#777" stroke-width="1"/></svg>
<div class="tx" style="left:569px;top:228px;letter-spacing:0.093px">Do not allow COM port redirection</div>
<div class="tx" style="left:906px;top:228px;letter-spacing:0.182px">Not configured</div>
<div class="tx" style="left:1089px;top:228px;letter-spacing:0.319px">No</div>
<div class="abs" style="left:567px;top:246px;width:594px;height:18px;background:#efefef"></div>
<svg class="abs" style="left:552px;top:247px" width="13" height="15" viewBox="0 0 13 15"><path d="M0 0 H9.5 L13 3.5 V14.5 H0 Z" fill="#63a7d8"/><rect x="0" y="0" width="8" height="14.5" fill="url(#ck)"/><path d="M4 3.5l1.5 1.5M4 7l1.5 1.5M4 10.5l1.5 1.5" stroke="#15406b" stroke-width="1"/></svg>
<div class="tx" style="left:569px;top:247px;letter-spacing:0.029px">Do not allow drive redirection</div>
<div class="tx" style="left:906px;top:247px;letter-spacing:0.182px">Not configured</div>
<div class="tx" style="left:1089px;top:247px;letter-spacing:0.319px">No</div>
<svg class="abs" style="left:552px;top:266px" width="13" height="15" viewBox="0 0 13 15"><path d="M.5 .5 H9 L12.5 4 V14.5 H.5 Z" fill="#fff" stroke="#8a8a8a"/><path d="M9 .5 V4 H12.5" fill="#eee" stroke="#8a8a8a" stroke-width=".8"/><rect x="2.5" y="4" width="2" height="2" fill="#333"/><rect x="2.5" y="7.5" width="2" height="2" fill="#333"/><rect x="2.5" y="11" width="2" height="2" fill="#333"/><path d="M6 5 H10 M6 8.5 H10 M6 12 H10" stroke="#777" stroke-width="1"/></svg>
<div class="tx" style="left:569px;top:266px;letter-spacing:0.022px">Do not allow LPT port redirection</div>
<div class="tx" style="left:906px;top:266px;letter-spacing:0.182px">Not configured</div>
<div class="tx" style="left:1089px;top:266px;letter-spacing:0.319px">No</div>
<svg class="abs" style="left:552px;top:285px" width="13" height="15" viewBox="0 0 13 15"><path d="M.5 .5 H9 L12.5 4 V14.5 H.5 Z" fill="#fff" stroke="#8a8a8a"/><path d="M9 .5 V4 H12.5" fill="#eee" stroke="#8a8a8a" stroke-width=".8"/><rect x="2.5" y="4" width="2" height="2" fill="#333"/><rect x="2.5" y="7.5" width="2" height="2" fill="#333"/><rect x="2.5" y="11" width="2" height="2" fill="#333"/><path d="M6 5 H10 M6 8.5 H10 M6 12 H10" stroke="#777" stroke-width="1"/></svg>
<div class="tx" style="left:569px;top:285px;letter-spacing:-0.005px">Do not allow supported Plug and Play device redirection</div>
<div class="tx" style="left:906px;top:285px;letter-spacing:0.182px">Not configured</div>
<div class="tx" style="left:1089px;top:285px;letter-spacing:0.319px">No</div>
<svg class="abs" style="left:552px;top:304px" width="13" height="15" viewBox="0 0 13 15"><path d="M.5 .5 H9 L12.5 4 V14.5 H.5 Z" fill="#fff" stroke="#8a8a8a"/><path d="M9 .5 V4 H12.5" fill="#eee" stroke="#8a8a8a" stroke-width=".8"/><rect x="2.5" y="4" width="2" height="2" fill="#333"/><rect x="2.5" y="7.5" width="2" height="2" fill="#333"/><rect x="2.5" y="11" width="2" height="2" fill="#333"/><path d="M6 5 H10 M6 8.5 H10 M6 12 H10" stroke="#777" stroke-width="1"/></svg>
<div class="tx" style="left:569px;top:304px;letter-spacing:0.011px">Do not allow smart card device redirection</div>
<div class="tx" style="left:906px;top:304px;letter-spacing:0.182px">Not configured</div>
<div class="tx" style="left:1089px;top:304px;letter-spacing:0.319px">No</div>
<div class="abs" style="left:335px;top:660px;width:826px;height:5px;background:#fff;border-top:1px solid #7d7d7d"></div>
<div class="abs" style="left:1138px;top:661px;width:23px;height:2px;background:#fff"></div>
<div class="abs" style="left:1138px;top:663px;width:23px;height:1px;background:#555"></div>
<div class="abs" style="left:404px;top:663px;width:60px;height:2px;border-top:1px solid #9a9a9a;border-left:1px solid #9a9a9a"></div>
<div class="abs" style="left:13px;top:664px;width:226px;height:1px;background:#b4b4b4"></div>
<div class="abs" style="left:439px;top:580px;width:13px;height:80px;background:linear-gradient(to right,rgba(0,0,0,0),rgba(0,0,0,.17));-webkit-mask-image:linear-gradient(to bottom,transparent,#000 25%);mask-image:linear-gradient(to bottom,transparent,#000 25%)"></div>
<!-- dialog -->
<div id="dlg" class="abs" style="left:452px;top:324px;width:686px;height:345px;background:#f0f0f0;border:1px solid;border-color:#9c9c9c #5e5e5e #5e5e5e #9c9c9c;box-shadow:5px 5px 14px 0 rgba(0,0,0,.32)">
<div class="abs" style="left:0;top:0;width:684px;height:30px;background:#fff"></div>
<!-- title icon -->
<svg class="abs" style="left:7px;top:6px" width="18" height="17" viewBox="460 331 18 17"><defs><linearGradient id="mg" x1="0" y1="0" x2="1" y2="1"><stop offset="0" stop-color="#2237b8"/><stop offset=".5" stop-color="#4c69dd"/><stop offset="1" stop-color="#93aaf0"/></linearGradient></defs><path d="M466.5 332.6 L476.3 331.8 L476.3 343 L467.5 343.4Z" fill="url(#mg)" stroke="#cfd9f3" stroke-width=".7"/><path d="M463 334.2 L469.6 332.8 L470.4 340.6 L466.6 343 L463 342Z" fill="#141f80"/><path d="M464.6 335 L468.6 334.2 L469 338.5 L465 339.5Z" fill="#2a3db0"/><path d="M461.6 343.2 L471.5 341.4 L474 344 L463.6 346.6Z" fill="#a3c4e6" stroke="#7ea3d0" stroke-width=".5"/><path d="M462.2 341.2 L467 340.2 L467.6 342.2 L462.8 343.2Z" fill="#5f86cf"/></svg>
<div class="tx" style="left:29px;top:7px;letter-spacing:0.029px">Do not allow drive redirection</div>
<svg class="abs" style="left:565px;top:9px" width="12" height="12"><path d="M0 5.5H10" stroke="#d4d4d4" stroke-width="1"/></svg>
<svg class="abs" style="left:610px;top:9px" width="12" height="12"><rect x=".5" y=".5" width="9" height="9" fill="none" stroke="#000" stroke-width="1"/></svg>
<svg class="abs" style="left:656px;top:9px" width="12" height="12"><path d="M.3 .3 L10.2 10.2 M10.2 .3 L.3 10.2" stroke="#000" stroke-width="1.1"/></svg>
<!-- second icon -->
<svg class="abs" style="left:5px;top:43px" width="18" height="18" viewBox="458 368 18 18"><rect x="459.7" y="369.9" width="14.6" height="14" fill="#fbf8ea" stroke="#44606a" stroke-width="1.5"/><rect x="459.4" y="369.2" width="15.2" height="3.8" fill="#4b6b76"/><path d="M461.5 370.2v2M464 370.2v2M466.5 370.2v2M469 370.2v2M471.5 370.2v2" stroke="#a9c0c7" stroke-width=".9"/><path d="M460.4 373.6H473.6" stroke="#d9c98a" stroke-width="1"/><rect x="461" y="375" width="5.6" height="7.8" fill="#dfe4e6"/><path d="M462.6 376.2 V381.6 L466 378.9Z" fill="#3f8f48"/><path d="M468 376.5h5M468 378.8h5M468 381.1h5" stroke="#cdbb78" stroke-width="1.1"/></svg>
<div class="tx" style="left:30px;top:42px;letter-spacing:0.029px">Do not allow drive redirection</div>
<!-- buttons -->
<div class="abs btn" style="left:375px;top:45px">Previous Setting</div>
<div class="abs btn" style="left:484px;top:45px">Next Setting</div>
<!-- radios -->
<div class="abs rad" style="left:9px;top:91px"></div><div class="tx" style="left:26px;top:90px;letter-spacing:0.125px">Not Configured</div>
<div class="abs rad" style="left:9px;top:119px"><i></i></div><div class="tx" style="left:26px;top:118px;letter-spacing:-0.265px">Enabled</div>
<div class="abs rad" style="left:9px;top:147px"></div><div class="tx" style="left:26px;top:146px;letter-spacing:-0.123px">Disabled</div>
<!-- comment -->
<div class="tx" style="left:131px;top:85px;letter-spacing:-0.075px">Comment:</div>
<div class="abs" style="left:217px;top:87px;width:458px;height:72px;background:#fff;border:1px solid #7a7a7a"></div>
<div class="abs" style="left:657px;top:88px;width:17px;height:70px;background:#f0f0f0"></div>
<svg class="abs" style="left:660px;top:94px" width="11" height="8" viewBox="0 0 11 8"><path d="M1.5 6 L5.5 2 L9.5 6" fill="none" stroke="#c4c4c4" stroke-width="1.4"/></svg>
<svg class="abs" style="left:660px;top:144px" width="11" height="8" viewBox="0 0 11 8"><path d="M1.5 2 L5.5 6 L9.5 2" fill="none" stroke="#c4c4c4" stroke-width="1.4"/></svg>
<!-- supported -->
<div class="tx" style="left:131px;top:163px;letter-spacing:0.005px">Supported on:</div>
<div class="abs" style="left:217px;top:165px;width:458px;height:46px;background:#f0f0f0;border:1px solid #7a7a7a"></div>
<div class="tx" style="left:224px;top:168px;letter-spacing:-0.211px">At least Windows Server 2003 operating systems or Windows XP Professional</div>
<svg class="abs" style="left:660px;top:172px" width="11" height="8" viewBox="0 0 11 8"><path d="M1.5 6 L5.5 2 L9.5 6" fill="none" stroke="#c4c4c4" stroke-width="1.4"/></svg>
<svg class="abs" style="left:660px;top:196px" width="11" height="8" viewBox="0 0 11 8"><path d="M1.5 2 L5.5 6 L9.5 2" fill="none" stroke="#c4c4c4" stroke-width="1.4"/></svg>
<!-- options/help -->
<div class="tx" style="left:6px;top:224px;letter-spacing:-0.021px">Options:</div>
<div class="tx" style="left:311px;top:224px;letter-spacing:-0.141px">Help:</div>
<div class="abs" style="left:3px;top:260px;width:298px;height:90px;background:#fff;border:1px solid #6e6e6e"></div>
<div class="abs" style="left:309px;top:260px;width:353px;height:90px;background:#fff;border:1px solid #6e6e6e"></div>
<div class="tx" style="left:315px;top:262px;letter-spacing:-0.007px">This policy setting specifies whether to prevent the mapping of</div>
<div class="tx" style="left:315px;top:277px;letter-spacing:-0.218px">client drives in a Remote Desktop Services session (drive</div>
<div class="tx" style="left:315px;top:292px;letter-spacing:-0.005px">redirection).</div>
<div class="tx" style="left:315px;top:322px;letter-spacing:-0.242px">By default, an RD Session Host server maps client drives</div>
<div class="abs" style="left:662px;top:260px;width:16px;height:90px;background:#f0f0f0"></div>
<div class="abs" style="left:663px;top:277px;width:14.5px;height:80px;background:#cdcdcd"></div>
<svg class="abs" style="left:665px;top:264px" width="12" height="10"><path d="M2.3 6.8 L5.5 3 L8.7 6.8" fill="none" stroke="#484848" stroke-width="2.1"/></svg>
</div>
</body></html>
